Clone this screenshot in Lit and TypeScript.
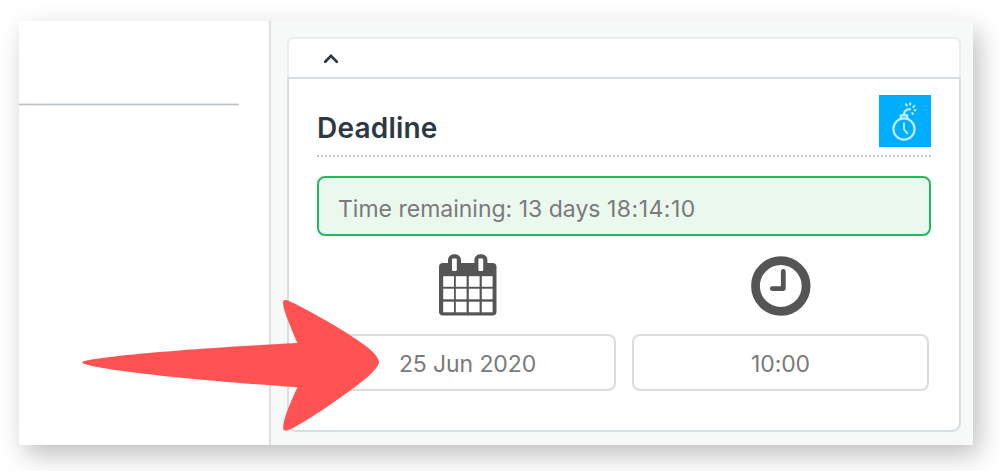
import { LitElement, html, css, svg } from 'lit';
import { customElement, property } from 'lit/decorators.js';

@customElement('date-field')
export class DateField extends LitElement {
  @property({ type: String }) icon = 'calendar';
  @property({ type: String }) value = '';

  static styles = css`
    :host {
      display: flex;
      flex: 1;
      flex-direction: column;
      align-items: center;
    }
    .icon {
      display: block;
      width: 62px;
      height: 64px;
      margin-bottom: 17px;
      fill: #555;
    }
    .value {
      box-sizing: border-box;
      width: 100%;
      height: 57px;
      border: 2px solid #dcdcdc;
      border-radius: 8px;
      background: #fff;
      color: #7a7a7a;
      font-size: 23px;
      line-height: 56px;
      text-align: center;
      letter-spacing: -0.1px;
    }
  `;

  calendar() {
    const columns = [6.2, 18.8, 31.8, 44.8];
    const rows = [23.2, 35.7, 48.7];
    return svg`
      <rect x="2" y="10" width="57.5" height="52.5" rx="4" />
      <rect x="11" y="1.3" width="13" height="20" rx="5.5" />
      <rect x="37.4" y="1.3" width="13" height="20" rx="5.5" />
      <rect x="15" y="5.5" width="4.8" height="12.5" rx="1" fill="#fff" />
      <rect x="41.4" y="5.5" width="4.8" height="12.5" rx="1" fill="#fff" />
      ${rows.map((y) =>
        columns.map((x) => svg`<rect x=${x} y=${y} width="10.8" height="10.6" fill="#fff" />`)
      )}
    `;
  }

  clock() {
    return svg`
      <circle cx="30.8" cy="33" r="25.3" fill="none" stroke="#555" stroke-width="8.8" />
      <path d="M33.3 18.5V35.6H22.3" fill="none" stroke="#555" stroke-width="4.8" stroke-linejoin="round" stroke-linecap="round" />
    `;
  }

  render() {
    return html`
      <svg class="icon" viewBox="0 0 62 64">
        ${this.icon === 'clock' ? this.clock() : this.calendar()}
      </svg>
      <div class="value">${this.value}</div>
    `;
  }
}

@customElement('app-root')
export class AppRoot extends LitElement {
  static styles = css`
    :host {
      display: block;
      box-sizing: border-box;
      position: relative;
      height: 471px;
      padding: 21px 27px 26px 19px;
      overflow: hidden;
      background: #fff;
      font-family: Inter, 'Liberation Sans', sans-serif;
    }
    .window {
      display: flex;
      height: 424px;
      background: #fff;
      box-shadow: 6px 10px 24px rgba(0, 0, 0, 0.25);
    }
    .main {
      box-sizing: border-box;
      width: 252px;
      padding-top: 82px;
      border-right: 2px solid #d9dfe3;
    }
    .rule {
      width: 220px;
      height: 1px;
      border: solid #e6eaec;
      border-width: 1px 0;
      background: #bcc2c6;
    }
    .sidebar {
      flex: 1;
      padding: 16px 12px 0 16px;
      background: #f7f9f9;
    }
    .card-header {
      box-sizing: border-box;
      height: 40px;
      padding: 14px 0 0 34px;
      border: 2px solid #ebecec;
      border-bottom: 0;
      border-radius: 7px 7px 0 0;
      background: #fff;
    }
    .chevron {
      display: block;
      width: 16px;
      height: 11px;
      fill: none;
      stroke: #2d3942;
      stroke-width: 2.7;
      stroke-linecap: round;
    }
    .card-body {
      box-sizing: border-box;
      height: 355px;
      padding: 16px 28px 0;
      border: 2px solid #d8dde1;
      border-radius: 0 0 9px 9px;
      background: #fff;
    }
    .title-row {
      display: flex;
      justify-content: space-between;
      height: 60px;
      border-bottom: 2px dotted #c3c7ca;
    }
    .title {
      margin: 15px 0 0;
      color: #2d3942;
      font-size: 28px;
      font-weight: 600;
      line-height: 36px;
      letter-spacing: 0.2px;
    }
    .bomb {
      width: 52px;
      height: 52px;
      background: #00aeff;
      fill: none;
      stroke: #c5edff;
      stroke-width: 2.2;
      stroke-linecap: round;
    }
    .remaining {
      box-sizing: border-box;
      height: 60px;
      margin-top: 19px;
      padding-left: 19px;
      border: 2px solid #24b95a;
      border-radius: 8px;
      background: #ebf8ee;
      color: #7a7a7a;
      font-size: 23px;
      line-height: 62px;
      white-space: nowrap;
    }
    .countdown {
      letter-spacing: 0.5px;
    }
    .fields {
      display: flex;
      gap: 16px;
      margin: 17px 2px 0;
    }
    .arrow {
      position: absolute;
      left: 80px;
      top: 296px;
      width: 302px;
      height: 138px;
      fill: #ff5353;
    }
  `;

  render() {
    return html`
      <div class="window">
        <div class="main"><div class="rule"></div></div>
        <div class="sidebar">
          <div class="card-header">
            <svg class="chevron" viewBox="0 0 16 11"><path d="M2.2 8.7L8 2.9L13.8 8.7" /></svg>
          </div>
          <div class="card-body">
            <div class="title-row">
              <h2 class="title">Deadline</h2>
              <svg class="bomb" viewBox="0 0 52 52">
                <circle cx="25" cy="34" r="10.6" />
                <path d="M21.8 23V20.3H28.2V23" />
                <path d="M25 19.5Q25.5 14.3 31 14.2" />
                <path d="M25 28V34.5L28.4 38.3" stroke-width="1.8" />
                <path d="M27 9.2L27.8 10.5M31.2 8.3V9.5M35.4 10.9L34.4 12M35.6 15.2H36.6M33.2 18L33.8 19" stroke-width="2" />
              </svg>
            </div>
            <div class="remaining">Time remaining: 13 days <span class="countdown">18:14:10</span></div>
            <div class="fields">
              <date-field icon="calendar" value="25 Jun 2020"></date-field>
              <date-field icon="clock" value="10:00"></date-field>
            </div>
          </div>
        </div>
      </div>
      <svg class="arrow" viewBox="80 296 302 138">
        <path
          d="M82.3 362.4C83 359 150 351 297.3 343C288 321 282 307 283.2 301.5C284 298.2 289 300.8 294 303.3C319 316 352 335 369 348.5C376 354.5 379 359.5 379 362.3C379 365.3 374 371.5 367 377.5C346 395 312 417.5 294 427.5C288 430.7 284.5 431.7 283.5 429.5C281.8 425 287 409 297.5 387.2C150 377 83 366.5 82.3 362.4Z"
        />
      </svg>
    `;
  }
}
